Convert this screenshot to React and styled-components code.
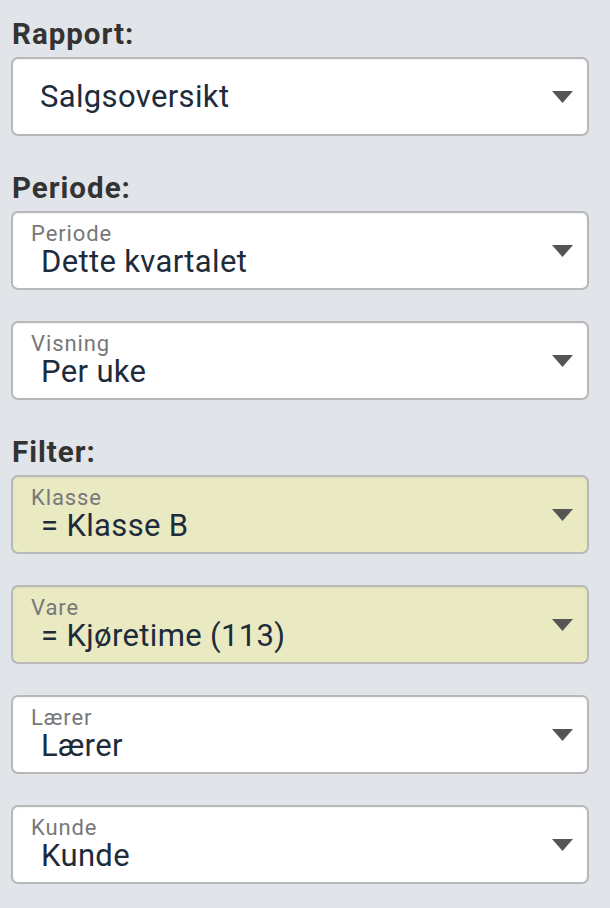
import React from "react";
import styled, { createGlobalStyle } from "styled-components";

const Global = createGlobalStyle`
  html, body {
    margin: 0;
    padding: 0;
    background: #e1e4e9;
  }
  body {
    font-family: Roboto, "Noto Sans", "Liberation Sans", sans-serif;
  }
`;

const Page = styled.div`
  display: flex;
  flex-direction: column;
  gap: 36px;
  padding: 18px 21px 24px 11px;
  min-height: 908px;
  box-sizing: border-box;
  background: #e1e4e9;
`;

const Section = styled.section`
  display: flex;
  flex-direction: column;
  gap: 7px;
`;

const Stack = styled.div`
  display: flex;
  flex-direction: column;
  gap: 31px;
`;

const Heading = styled.h2`
  margin: 0 0 0 1px;
  font-size: 29.5px;
  line-height: 32px;
  font-weight: 700;
  letter-spacing: 1px;
  color: #333333;
`;

const Box = styled.div`
  position: relative;
  display: flex;
  flex-direction: column;
  justify-content: center;
  height: 79px;
  box-sizing: border-box;
  border: 2px solid #b8b8b8;
  border-radius: 7px;
  background: ${(p) => (p.$active ? "#e9e9c2" : "#ffffff")};
  box-shadow: inset 0 1px 2px rgba(0, 0, 0, 0.06);
  padding: 0 60px 0 18px;
`;

const Label = styled.span`
  font-size: 22px;
  line-height: 22px;
  letter-spacing: 0.9px;
  color: #787878;
`;

const Value = styled.span`
  font-size: 31px;
  line-height: 32px;
  margin-top: 1px;
  letter-spacing: 0.35px;
  padding-left: ${(p) => (p.$plain ? "9px" : "10px")};
  color: #1e2b3b;
  white-space: nowrap;
`;

const Arrow = styled.svg`
  position: absolute;
  right: 14px;
  top: 50%;
  width: 21px;
  height: 12px;
  margin-top: -6px;
`;

function Select({ label, value, active }) {
  return (
    <Box $active={active}>
      {label && <Label>{label}</Label>}
      <Value $plain={!label}>{value}</Value>
      <Arrow viewBox="0 0 21 12" aria-hidden="true">
        <path d="M0 0 H21 L10.5 12 Z" fill="#555555" />
      </Arrow>
    </Box>
  );
}

const groups = [
  { title: "Rapport:", items: [{ value: "Salgsoversikt" }] },
  {
    title: "Periode:",
    items: [
      { label: "Periode", value: "Dette kvartalet" },
      { label: "Visning", value: "Per uke" },
    ],
  },
  {
    title: "Filter:",
    items: [
      { label: "Klasse", value: "= Klasse B", active: true },
      { label: "Vare", value: "= Kjøretime (113)", active: true },
      { label: "Lærer", value: "Lærer" },
      { label: "Kunde", value: "Kunde" },
    ],
  },
];

export default function App() {
  return (
    <>
      <Global />
      <Page>
        {groups.map((g) => (
          <Section key={g.title}>
            <Heading>{g.title}</Heading>
            <Stack>
              {g.items.map((it) => (
                <Select key={it.value} {...it} />
              ))}
            </Stack>
          </Section>
        ))}
      </Page>
    </>
  );
}
